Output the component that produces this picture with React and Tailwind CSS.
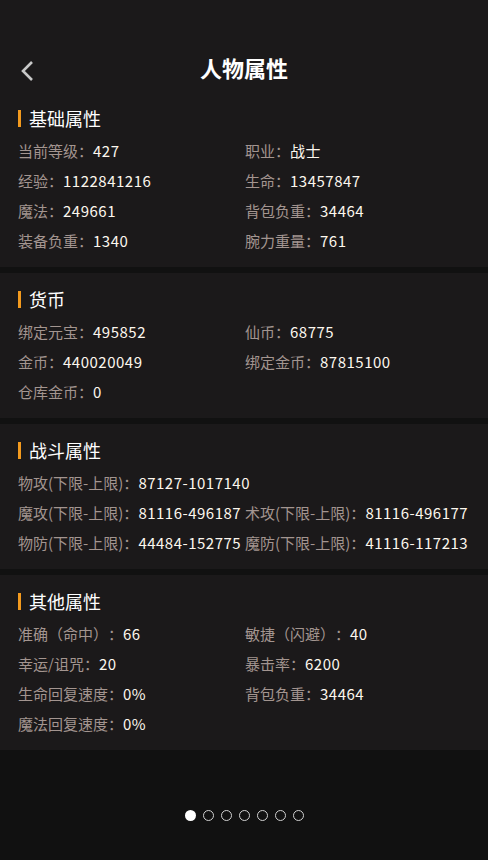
const sections = [
  {
    title: "基础属性",
    items: [
      ["当前等级", "427"],
      ["职业", "战士"],
      ["经验", "1122841216"],
      ["生命", "13457847"],
      ["魔法", "249661"],
      ["背包负重", "34464"],
      ["装备负重", "1340"],
      ["腕力重量", "761"],
    ],
  },
  {
    title: "货币",
    items: [
      ["绑定元宝", "495852"],
      ["仙币", "68775"],
      ["金币", "440020049"],
      ["绑定金币", "87815100"],
      ["仓库金币", "0"],
    ],
  },
  {
    title: "战斗属性",
    items: [
      ["物攻(下限-上限)", "87127-1017140"],
      null,
      ["魔攻(下限-上限)", "81116-496187"],
      ["术攻(下限-上限)", "81116-496177"],
      ["物防(下限-上限)", "44484-152775"],
      ["魔防(下限-上限)", "41116-117213"],
    ],
  },
  {
    title: "其他属性",
    items: [
      ["准确（命中）", "66"],
      ["敏捷（闪避）", "40"],
      ["幸运/诅咒", "20"],
      ["暴击率", "6200"],
      ["生命回复速度", "0%"],
      ["背包负重", "34464"],
      ["魔法回复速度", "0%"],
    ],
  },
];

const Section = ({ title, items }) => (
  <div className="bg-[#1b191a] px-[18px] pt-[15px] pb-[11px]">
    <div className="flex items-center h-[22px]">
      <span className="w-[3px] h-[17px] bg-[#f39a1e]"></span>
      <span className="ml-[8px] text-[18px] text-white leading-[22px]">{title}</span>
    </div>
    <div className="grid grid-cols-[227px_1fr] mt-[7px]">
      {items.map((it, i) =>
        it ? (
          <div
            key={i}
            className="h-[30px] flex items-center text-[15px] whitespace-nowrap [text-spacing-trim:space-all]"
          >
            <span className="text-[#a39590]">{it[0]}：</span>
            <span className="text-[#fdf7ee] tracking-[0.5px]">{it[1]}</span>
          </div>
        ) : (
          <div key={i} className="h-[30px]"></div>
        )
      )}
    </div>
  </div>
);

export default function App() {
  return (
    <div
      className="w-[488px] h-[860px] bg-[#111111] flex flex-col"
      style={{ fontFamily: '"Microsoft YaHei", "Noto Sans CJK SC", sans-serif' }}
    >
      <div className="bg-[#1b191a] h-[92px] relative">
        <svg
          className="absolute left-[18px] top-[60px]"
          width="18"
          height="22"
          viewBox="0 0 18 22"
        >
          <polyline
            points="14,2 5,11 14,20"
            fill="none"
            stroke="#c8c8c8"
            strokeWidth="2.6"
          />
        </svg>
        <div className="pt-[52px] text-center text-[22px] leading-[30px] font-semibold text-white">
          人物属性
        </div>
      </div>
      <div className="flex flex-col gap-[6px]">
        {sections.map((s) => (
          <Section key={s.title} {...s} />
        ))}
      </div>
      <div className="flex justify-center gap-[7px] mt-[60px]">
        <span className="w-[11px] h-[11px] rounded-full bg-white"></span>
        {[1, 2, 3, 4, 5, 6].map((n) => (
          <span key={n} className="w-[11px] h-[11px] rounded-full border-[1.5px] border-[#d0d0d0]"></span>
        ))}
      </div>
    </div>
  );
}
